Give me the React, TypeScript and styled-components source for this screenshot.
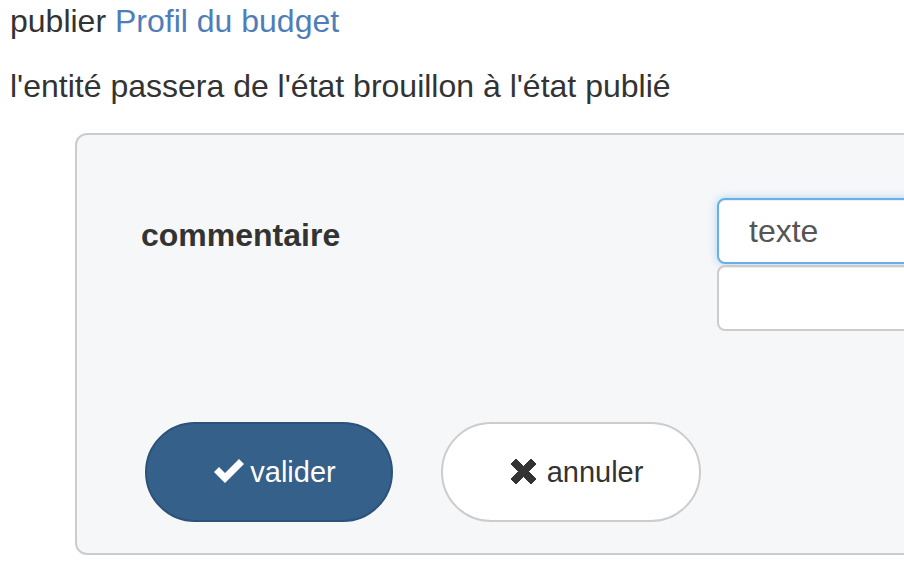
import styled, { createGlobalStyle } from "styled-components";

const GlobalStyle = createGlobalStyle`
  html, body {
    margin: 0;
    padding: 0;
    background: #ffffff;
    overflow: hidden;
  }
  body {
    font-family: "Liberation Sans", Arial, Helvetica, sans-serif;
    font-size: 32px;
    line-height: 40px;
    color: #333333;
  }
`;

const Page = styled.div`
  padding: 1px 0 0 10px;
  width: 1100px;
`;

const Title = styled.div`
  margin: 0 0 25px;
`;

const Link = styled.a`
  color: #4f7db8;
  text-decoration: none;
`;

const Intro = styled.p`
  margin: 0 0 27px;
`;

const Panel = styled.div`
  margin-left: 65px;
  width: 1000px;
  background: #f6f7f9;
  border: 2px solid #cccccc;
  border-radius: 12px;
  padding: 63px 0 31px 64px;
  box-sizing: border-box;
`;

const FormRow = styled.div`
  display: flex;
  align-items: flex-start;
`;

const Label = styled.label`
  flex: 0 0 576px;
  padding-top: 17px;
  font-weight: bold;
`;

const Fields = styled.div`
  flex: 1;
  display: flex;
  flex-direction: column;
  gap: 1px;
`;

const Input = styled.div<{ $focused?: boolean }>`
  height: 66px;
  box-sizing: border-box;
  background: #ffffff;
  border: 2px solid ${(p) => (p.$focused ? "#66afe9" : "#cccccc")};
  border-radius: 8px;
  padding: 11px 30px;
  color: #555555;
  box-shadow: ${(p) =>
    p.$focused
      ? "inset 0 1px 1px rgba(0,0,0,.075), 0 0 8px rgba(102,175,233,.5)"
      : "inset 0 1px 1px rgba(0,0,0,.075)"};
`;

const Actions = styled.div`
  display: flex;
  gap: 48px;
  margin-top: 91px;
  padding-left: 4px;
`;

const Button = styled.button<{ $primary?: boolean }>`
  display: flex;
  align-items: center;
  justify-content: center;
  height: 100px;
  width: ${(p) => (p.$primary ? "248px" : "260px")};
  border-radius: 50px;
  font-family: inherit;
  font-size: 29px;
  line-height: 40px;
  background: ${(p) => (p.$primary ? "#35608a" : "#ffffff")};
  color: ${(p) => (p.$primary ? "#ffffff" : "#333333")};
  border: 2px solid ${(p) => (p.$primary ? "#2c5279" : "#cccccc")};
  padding: 0 0 0 12px;
  cursor: pointer;
`;

const Icon = styled.svg<{ $gap: number }>`
  margin-right: ${(p) => p.$gap}px;
  margin-top: -2px;
  flex-shrink: 0;
`;

const CheckIcon = () => (
  <Icon $gap={6} width="30" height="26" viewBox="0 0 30 26">
    <polygon points="0,14 5,9 11,15 25,1 30,6 11,25" fill="currentColor" />
  </Icon>
);

const CrossIcon = () => (
  <Icon $gap={11} width="25" height="25" viewBox="0 0 25 25">
    <polygon
      points="5,0 12.5,7.5 20,0 25,5 17.5,12.5 25,20 20,25 12.5,17.5 5,25 0,20 7.5,12.5 0,5"
      fill="currentColor"
      stroke="currentColor"
      strokeWidth="1"
      strokeLinejoin="round"
    />
  </Icon>
);

export default function App() {
  return (
    <>
      <GlobalStyle />
      <Page>
        <Title>
          publier <Link href="#">Profil du budget</Link>
        </Title>
        <Intro>l'entité passera de l'état brouillon à l'état publié</Intro>
        <Panel>
          <FormRow>
            <Label>commentaire</Label>
            <Fields>
              <Input $focused>texte</Input>
              <Input />
            </Fields>
          </FormRow>
          <Actions>
            <Button $primary>
              <CheckIcon />
              valider
            </Button>
            <Button>
              <CrossIcon />
              annuler
            </Button>
          </Actions>
        </Panel>
      </Page>
    </>
  );
}
